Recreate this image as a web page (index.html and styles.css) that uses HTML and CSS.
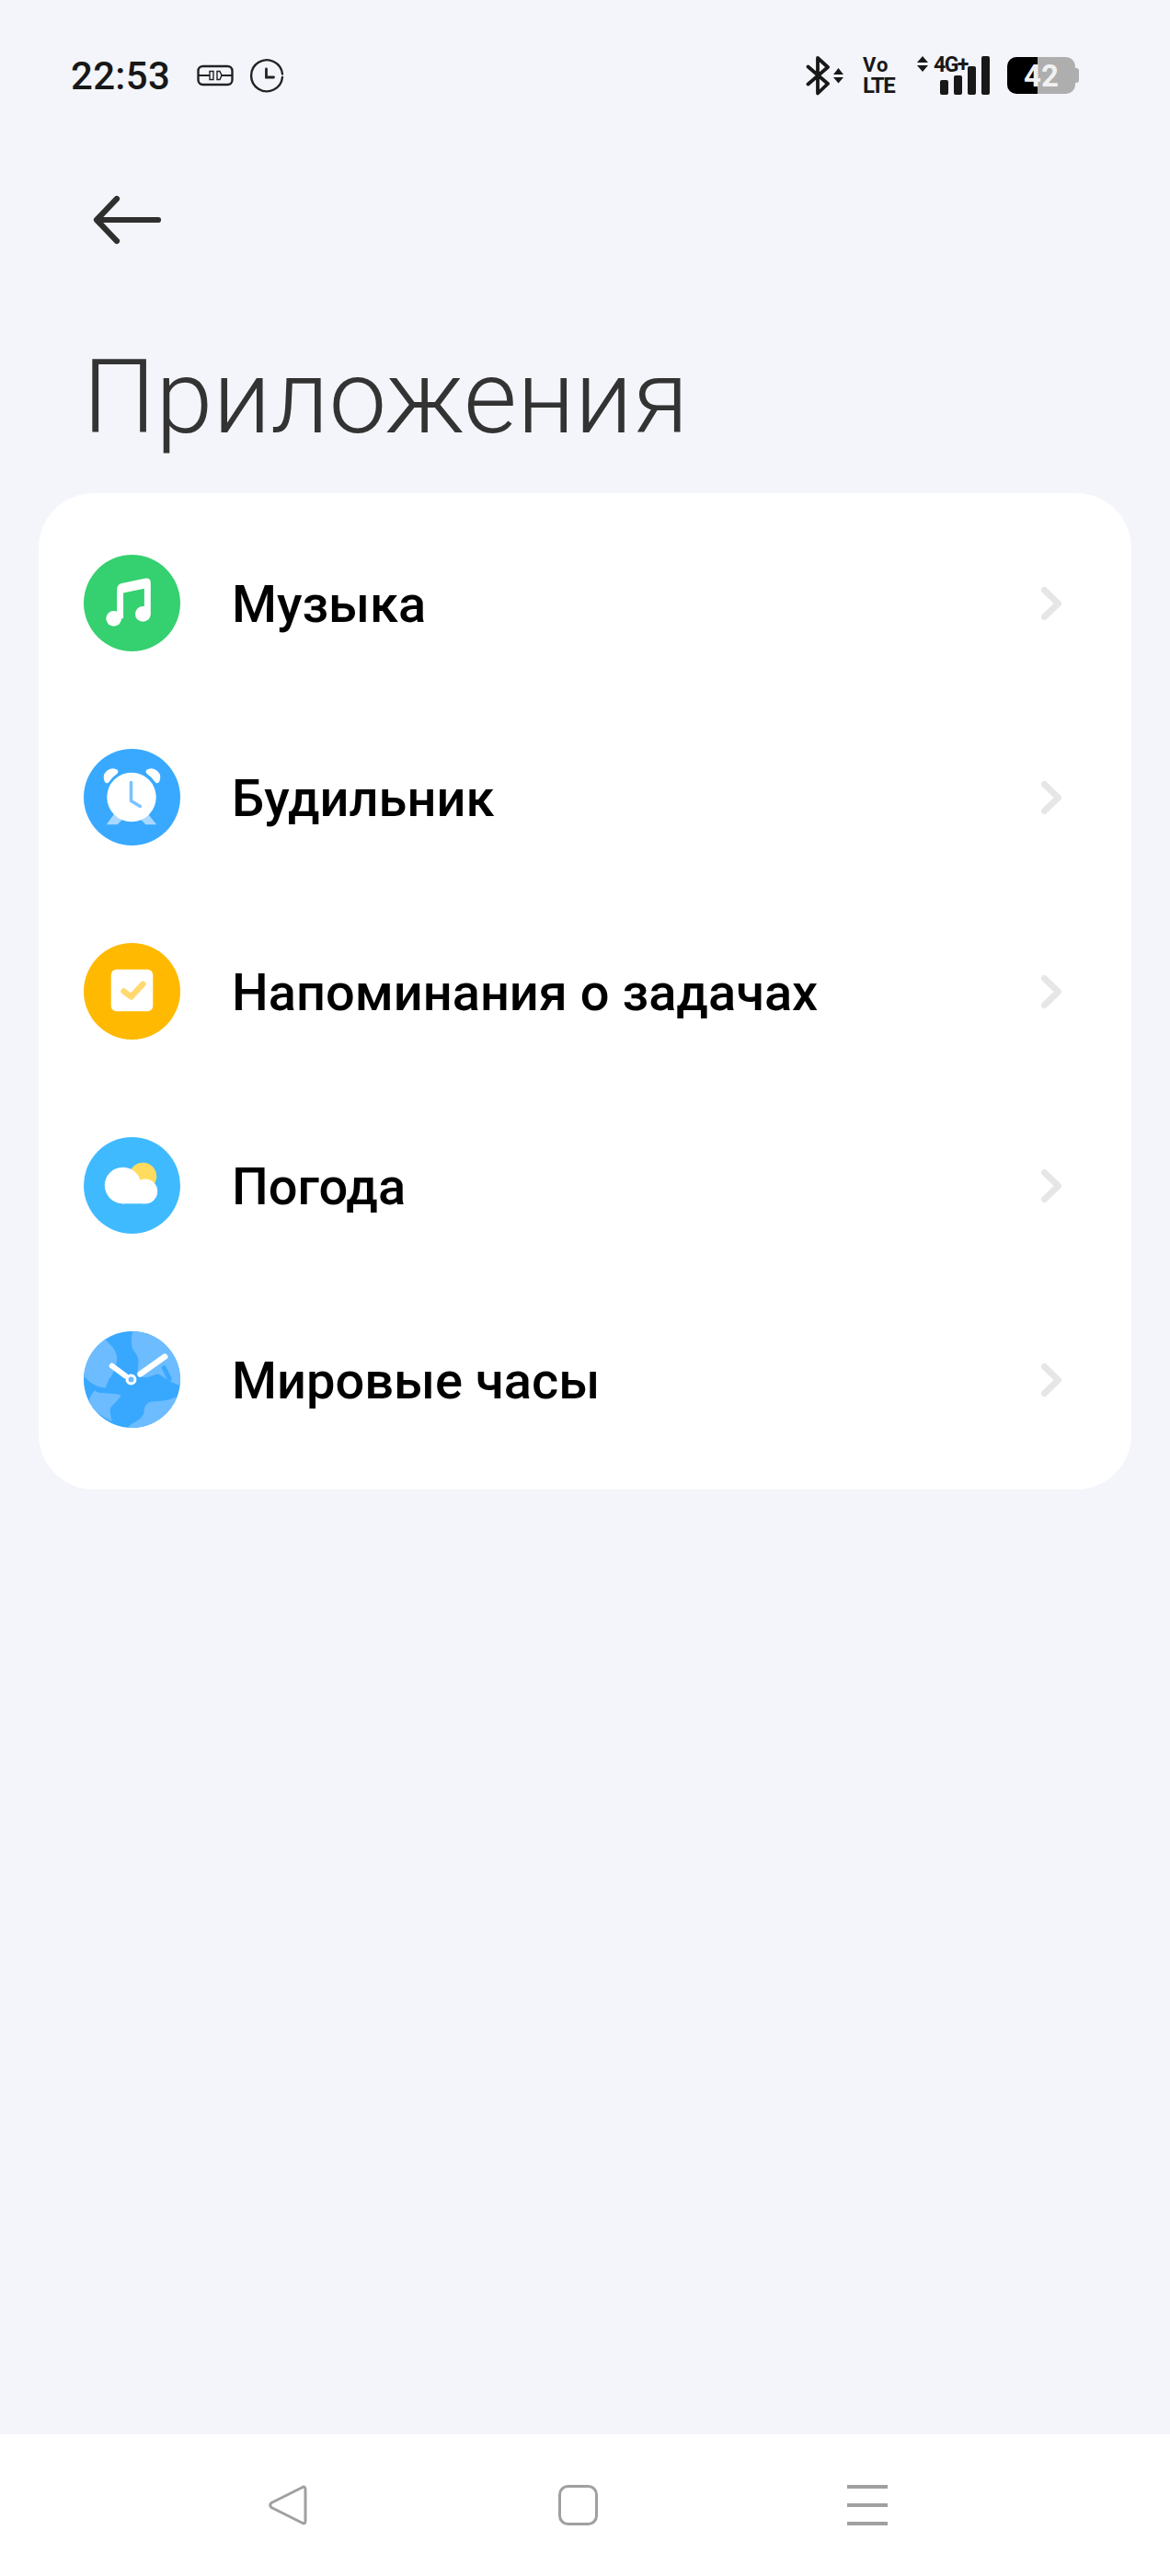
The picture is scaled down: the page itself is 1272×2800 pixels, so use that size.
FILE: index.html
```html
<!DOCTYPE html>
<html lang="ru">
<head>
  <meta charset="UTF-8">
  <meta name="viewport" content="width=device-width, initial-scale=1.0">
  <title>Приложения</title>
  <link rel="stylesheet" href="styles.css">
</head>
<body>

  <div class="phone">
    <div class="status-bar">
      <div class="status-left">
        <span class="time">22:53</span>
        <svg class="ic-link" width="40" height="24" viewBox="0 0 40 24" fill="none" stroke="#222">
          <rect x="1.500" y="2" width="37" height="20" rx="5" stroke-width="2.4"/>
          <path d="M2 12h12M26 12h12" stroke-width="2"/>
          <path d="M18 7.500h-4v9h4zM22 7.500h3l2 4.500-2 4.500h-3z" stroke-width="1.400"/>
        </svg>
        <svg class="ic-clock" width="38" height="38" viewBox="0 0 38 38" fill="none" stroke="#222" stroke-linecap="round">
          <path d="M36 17.500A17 17 0 1 0 36 21" stroke-width="2.400"/>
          <path d="M18.500 12v9h8" stroke-width="2.800"/>
        </svg>
      </div>
      <div class="status-right">
        <svg class="ic-bt" width="44" height="44" viewBox="0 0 44 44" fill="none" stroke="#181818" stroke-width="3.800" stroke-linecap="round" stroke-linejoin="round">
          <path d="M3.500 12.500L25 31l-11 10.500V3L25 13 3.500 31.500"/>
          <path d="M31 21l5.500-7 5.500 7zM31 24l5.500 6.500L42 24z" fill="#181818" stroke="none"/>
        </svg>
        <div class="volte"><span class="vo">Vo</span><span class="lte">LTE</span></div>
        <div class="net">
          <svg class="ic-arrows" width="12" height="18" viewBox="0 0 12 18"><path d="M0 7l6-7 6 7zM0 10l6 7 6-7z" fill="#181818"/></svg>
          <span class="net-label">4G+</span>
          <div class="bars">
            <i class="bar bar-1"></i>
            <i class="bar bar-2"></i>
            <i class="bar bar-3"></i>
            <i class="bar bar-4"></i>
          </div>
        </div>
        <div class="battery">
          <div class="battery-body">
            <div class="battery-fill"></div>
            <span class="battery-num">42</span>
          </div>
          <div class="battery-tip"></div>
        </div>
      </div>
    </div>

    <div class="toolbar">
      <svg width="76" height="56" viewBox="0 0 76 56" fill="none" stroke="#2f2f2f" stroke-width="6.200" stroke-linecap="round" stroke-linejoin="round">
        <path d="M72 28H6M27 5L5 28l22 23"/>
      </svg>
    </div>

    <h1 class="page-title">Приложения</h1>

    <div class="card">
      <div class="row">
        <svg class="app-icon" viewBox="0 0 106 106">
          <circle cx="53" cy="53" r="53" fill="#35d06f"/>
          <path d="M36.500 70V38q0-6 6.500-7l24-5q6.500-1 6.500 5v34h-7V37l-23 5v28z" fill="#fff"/>
          <circle cx="33" cy="70" r="8.500" fill="#fff"/>
          <circle cx="65" cy="65" r="8.500" fill="#fff"/>
        </svg>
        <span class="row-label">Музыка</span>
        <svg class="chevron" width="24" height="38" viewBox="0 0 24 38" fill="none" stroke="#e6e6e6" stroke-width="7" stroke-linecap="round" stroke-linejoin="round"><path d="M4.500 4.500L19.500 19 4.500 33.500"/></svg>
      </div>
      <div class="row">
        <svg class="app-icon" viewBox="0 0 106 106">
          <circle cx="53" cy="53" r="53" fill="#38a9ff"/>
          <path d="M33 72L25 83h12l8-8zM71 72l9 11H68l-8-8z" fill="#a9d8ff"/>
          <path d="M23 36a10 10 0 0 1 14-13 3 3 0 0 1 0 4 40 40 0 0 0-10 10 3 3 0 0 1-4-1zM83 36a10 10 0 0 0-14-13 3 3 0 0 0 0 4 40 40 0 0 1 10 10 3 3 0 0 0 4-1z" fill="#fff"/>
          <circle cx="52.500" cy="53" r="27" fill="#fff"/>
          <path d="M52 37v20l10 6" fill="none" stroke="#7cc2ff" stroke-width="3.600" stroke-linecap="round" stroke-linejoin="round"/>
        </svg>
        <span class="row-label">Будильник</span>
        <svg class="chevron" width="24" height="38" viewBox="0 0 24 38" fill="none" stroke="#e6e6e6" stroke-width="7" stroke-linecap="round" stroke-linejoin="round"><path d="M4.500 4.500L19.500 19 4.500 33.500"/></svg>
      </div>
      <div class="row">
        <svg class="app-icon" viewBox="0 0 106 106">
          <circle cx="53" cy="53" r="53" fill="#ffb900"/>
          <rect x="30" y="29" width="46" height="46" rx="6" fill="#fff"/>
          <path d="M44 53l8 6 13-14" fill="none" stroke="#ffd970" stroke-width="6.500" stroke-linecap="round" stroke-linejoin="round"/>
        </svg>
        <span class="row-label">Напоминания о задачах</span>
        <svg class="chevron" width="24" height="38" viewBox="0 0 24 38" fill="none" stroke="#e6e6e6" stroke-width="7" stroke-linecap="round" stroke-linejoin="round"><path d="M4.500 4.500L19.500 19 4.500 33.500"/></svg>
      </div>
      <div class="row">
        <svg class="app-icon" viewBox="0 0 106 106">
          <circle cx="53" cy="53" r="53" fill="#40baff"/>
          <circle cx="65" cy="43" r="15" fill="#ffdc5e"/>
          <circle cx="43" cy="53" r="20" fill="#fff"/>
          <circle cx="67.500" cy="59.500" r="13.500" fill="#fff"/>
          <rect x="42" y="50" width="26" height="23" fill="#fff"/>
        </svg>
        <span class="row-label">Погода</span>
        <svg class="chevron" width="24" height="38" viewBox="0 0 24 38" fill="none" stroke="#e6e6e6" stroke-width="7" stroke-linecap="round" stroke-linejoin="round"><path d="M4.500 4.500L19.500 19 4.500 33.500"/></svg>
      </div>
      <div class="row">
        <svg class="app-icon" viewBox="0 0 106 106">
          <defs><clipPath id="globe"><circle cx="53" cy="53" r="53"/></clipPath></defs>
          <circle cx="53" cy="53" r="53" fill="#38a8ff"/>
          <g clip-path="url(#globe)" fill="#6dbcff">
            <path d="M24 9c4 5 10 9 12 17 2 8-2 16-6 24-3 2-4 8-6 12C14 62 6 56-2 47-2 30 10 18 24 9z"/>
            <path d="M54-2c-2 8-2 14-1 20 3 6 7 8 7 15s-2 11 0 15c6 5 14 2 20-1 4 0 6 3 10 5 5 3 10 6 17 8 2-15-2-30-15-42C82 7 68-2 54-2z"/>
            <path d="M12 65c6 5 14 1 29 5-3 8-11 10-12 16 0 4 1 8 2 13C20 94 10 86 5 78c2-6 4-10 7-13z"/>
            <path d="M47 108c3-8 15-8 19-18 0-6 2-10 6-12 8-2 18 0 29-6 0 18-20 36-54 36z"/>
          </g>
          <path d="M88 40l6 12" stroke="#38a8ff" stroke-width="5" stroke-linecap="round"/>
          <path d="M31 38l15 11" stroke="#fff" stroke-width="6" stroke-linecap="round"/>
          <path d="M62 47l27-19" stroke="#fff" stroke-width="6.500" stroke-linecap="round"/>
          <circle cx="52" cy="53" r="4.500" fill="#6dbcff" stroke="#fff" stroke-width="3"/>
        </svg>
        <span class="row-label">Мировые часы</span>
        <svg class="chevron" width="24" height="38" viewBox="0 0 24 38" fill="none" stroke="#e6e6e6" stroke-width="7" stroke-linecap="round" stroke-linejoin="round"><path d="M4.500 4.500L19.500 19 4.500 33.500"/></svg>
      </div>
    </div>

    <div class="spacer"></div>

    <div class="nav-bar">
      <svg width="44" height="44" viewBox="0 0 44 44" fill="none" stroke="#a0a0a0" stroke-width="3" stroke-linejoin="round"><path d="M41 5q0-4.500-4-2L4 19.500q-2.500 2.500 0 5L37 41q4 2.500 4-2z"/></svg>
      <svg width="43" height="44" viewBox="0 0 43 44" fill="none" stroke="#a0a0a0" stroke-width="3"><rect x="1.500" y="1.500" width="40" height="41" rx="9"/></svg>
      <div class="nav-menu"><i></i><i></i><i></i></div>
    </div>
  </div>

</body>
</html>
```

FILE: styles.css
```css
body {
  margin: 0;
  background-color: #f3f5fa;
  font-family: "Roboto", "Noto Sans", sans-serif;
  color: #000;
}

.phone {
  width: 1272px;
  height: 2800px;
  display: flex;
  flex-direction: column;
}

.status-bar {
  height: 44px;
  padding: 60px 0 0 77px;
  display: flex;
  align-items: center;
  justify-content: space-between;
}

.status-left {
  display: flex;
  align-items: center;
}

.time {
  font-size: 42px;
  font-weight: 500;
  letter-spacing: 0.300px;
  color: #181818;
  width: 137px;
}

.ic-clock {
  margin-left: 17px;
}

.status-right {
  display: flex;
  align-items: center;
  padding-right: 99px;
}

.volte {
  display: flex;
  flex-direction: column;
  font-weight: 700;
  color: #181818;
  margin-left: 19px;
  width: 38px;
}

.vo {
  font-size: 22px;
  line-height: 22px;
  letter-spacing: 1px;
}

.lte {
  font-size: 24px;
  line-height: 22px;
  letter-spacing: -1.500px;
}

.net {
  display: flex;
  align-items: flex-start;
  margin-left: 21px;
  height: 42px;
}

.net-label {
  font-size: 23px;
  font-weight: 700;
  line-height: 20px;
  margin-left: 6px;
  color: #181818;
  width: 37px;
  letter-spacing: -1.500px;
}

.bars {
  display: flex;
  align-items: flex-end;
  gap: 6px;
  height: 42px;
  margin-left: -30px;
}

.bar {
  display: block;
  width: 9px;
  background-color: #181818;
  border-radius: 2px;
}

.bar-1 { height: 16px; }
.bar-2 { height: 21px; }
.bar-3 { height: 31px; }
.bar-4 { height: 42px; }

.battery {
  display: flex;
  align-items: center;
  margin-left: 19px;
}

.battery-body {
  position: relative;
  width: 74px;
  height: 40px;
  background-color: #aeaeae;
  border-radius: 10px;
  overflow: hidden;
  display: flex;
  align-items: center;
  justify-content: center;
}

.battery-fill {
  position: absolute;
  left: 0;
  top: 0;
  bottom: 0;
  width: 33px;
  background-color: #000;
}

.battery-num {
  position: relative;
  font-size: 33px;
  font-weight: 700;
  color: #f1f1f1;
}

.battery-tip {
  width: 4px;
  height: 16px;
  background-color: #aeaeae;
  border-radius: 0 3px 3px 0;
}

.toolbar {
  padding: 107px 0 0 100px;
  height: 56px;
}

.page-title {
  margin: 105px 0 0;
  padding: 0 0 0 90px;
  font-size: 112px;
  font-weight: 300;
  line-height: 120px;
  color: #333;
  height: 120px;
}

.card {
  margin: 44px 42px 0;
  padding: 14px 0;
  background-color: #fff;
  border-radius: 60px;
}

.row {
  height: 211px;
  display: flex;
  align-items: center;
  padding: 0 75px 0 49px;
}

.app-icon {
  width: 105px;
  height: 105px;
  flex: none;
}

.row-label {
  flex: 1;
  margin-left: 56px;
  padding-top: 2px;
  font-size: 56px;
  font-weight: 500;
  color: #000;
}

.spacer {
  flex: 1;
}

.nav-bar {
  height: 154px;
  background-color: #fff;
  display: flex;
  align-items: center;
  padding: 0 307px 0 291px;
  justify-content: space-between;
}

.nav-menu {
  width: 44px;
  height: 44px;
  display: flex;
  flex-direction: column;
  justify-content: space-between;
}

.nav-menu i {
  display: block;
  height: 4px;
  background-color: #a0a0a0;
}
```
